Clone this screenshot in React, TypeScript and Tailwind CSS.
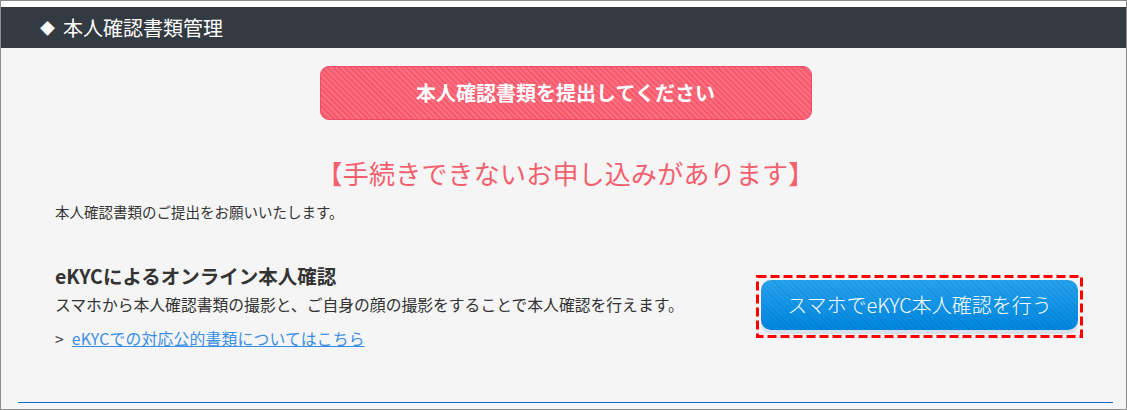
import React from 'react';

const font = { fontFamily: '"Noto Sans CJK JP", "Noto Sans", sans-serif' };

const App: React.FC = () => {
  return (
    <div
      className="w-[1127px] h-[410px] border border-[#8c8c8c] bg-[#f5f5f5] overflow-hidden flex flex-col text-[#333333]"
      style={font}
    >
      <div className="h-[6px] bg-white" />
      <div className="h-[41px] bg-[#333a42] flex items-center pl-[39px] text-white text-[20px] leading-none">
        <span className="text-[15px] mr-[8px]">◆</span>
        <span>本人確認書類管理</span>
      </div>

      <div className="flex-1 flex flex-col px-[17px] pr-[13px]">
        <div className="flex justify-center pt-[18px]">
          <div className="w-[492px] h-[54px] rounded-[9px] border border-[#ef4a6a] bg-[#f8586b] bg-[repeating-linear-gradient(45deg,rgba(255,255,255,0)_0px,rgba(255,255,255,0)_2px,rgba(255,255,255,0.14)_2px,rgba(255,255,255,0.14)_4px)] flex items-center justify-center text-white text-[20px] font-bold">
            本人確認書類を提出してください
          </div>
        </div>

        <p className="mt-[35px] text-center text-[26px] leading-[36px] text-[#f45f6e] tracking-[0.2px]">
          【手続きできないお申し込みがあります】
        </p>

        <div className="pl-[37px] pr-[30px]">
          <p className="mt-[10px] text-[14.5px] leading-[21px]">本人確認書類のご提出をお願いいたします。</p>

          <div className="mt-[40px] flex items-center justify-between">
            <div>
              <h2 className="text-[19.5px] leading-[28px] font-bold">eKYCによるオンライン本人確認</h2>
              <p className="mt-[3px] text-[15.8px] leading-[24px]">
                スマホから本人確認書類の撮影と、ご自身の顔の撮影をすることで本人確認を行えます。
              </p>
              <p className="mt-[10px] text-[15.8px] leading-[24px]">
                <span className="mr-[8px]">&gt;</span>
                <a href="#" className="text-[#3a8ee6] underline tracking-[0.2px]">eKYCでの対応公的書類についてはこちら</a>
              </p>
            </div>
            <div className="relative p-[5px]">
              <svg className="absolute inset-0 w-full h-full" preserveAspectRatio="none">
                <rect x="1.5" y="1.5" width="calc(100% - 3px)" height="calc(100% - 3px)" fill="none" stroke="#ff0000" strokeWidth="3" strokeDasharray="9 4" />
              </svg>
              <div className="w-[317px] h-[50px] mb-[3px] rounded-[10px] shadow-[0_4px_0_#d9e1ea] bg-[linear-gradient(180deg,#27a3ed,#0086de)] relative overflow-hidden flex items-center justify-center text-white text-[20px] font-light">
                <span className="absolute inset-0 bg-[repeating-linear-gradient(45deg,rgba(0,60,140,0)_0px,rgba(0,60,140,0)_3px,rgba(0,60,140,0.12)_3px,rgba(0,60,140,0.12)_4px)]" />
                <span className="relative">スマホでeKYC本人確認を行う</span>
              </div>
            </div>
          </div>
        </div>

        <div className="mt-auto mb-[6px] h-px bg-[#0a6dc7]" />
      </div>
    </div>
  );
};

export default App;
